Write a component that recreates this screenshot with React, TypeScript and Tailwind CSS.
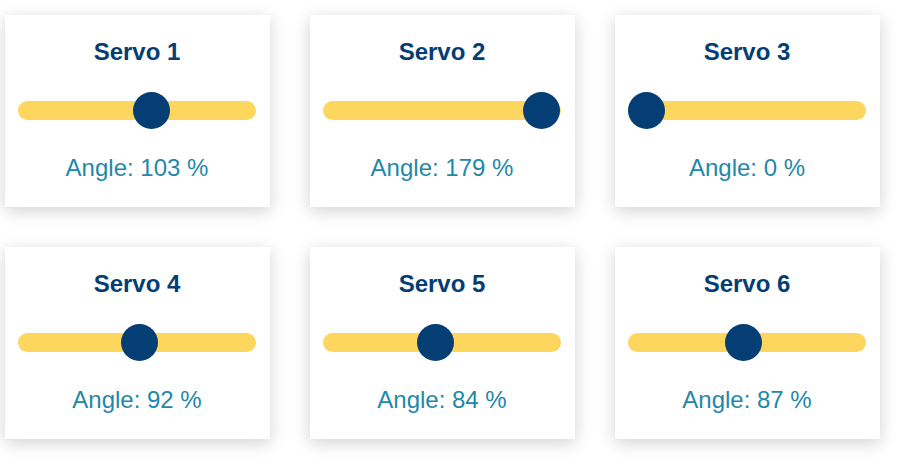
import React from 'react';

type Servo = { id: number; angle: number };

const servos: Servo[] = [
  { id: 1, angle: 103 },
  { id: 2, angle: 179 },
  { id: 3, angle: 0 },
  { id: 4, angle: 92 },
  { id: 5, angle: 84 },
  { id: 6, angle: 87 },
];

const ServoCard: React.FC<{ servo: Servo }> = ({ servo }) => {
  const ratio = servo.angle / 180;

  return (
    <div className="bg-white shadow-[0_4px_16px_0_rgba(0,0,0,0.18)] h-[192px] pt-[25px] pl-[13px] pr-[14px] flex flex-col items-center">
      <h2 className="text-[24px] leading-[24px] font-bold text-[#043e74]">Servo {servo.id}</h2>

      {/* slider */}
      <div className="relative w-full h-[37px] mt-[28px] flex items-center">
        <div className="w-full h-[19px] rounded-full bg-[#fdd65d]" />
        <div
          className="absolute top-0 w-[37px] h-[37px] rounded-full bg-[#043e74]"
          style={{ left: `calc((100% - 37px) * ${ratio})` }}
        />
      </div>

      <p className="mt-[27px] text-[24px] leading-[24px] text-[#1f88aa]">Angle: {servo.angle} %</p>
    </div>
  );
};

const App: React.FC = () => {
  return (
    <div className="w-[900px] h-[468px] bg-white pt-[15px] pl-[5px] font-['Liberation_Sans',Arial,sans-serif]">
      <div className="grid grid-cols-[repeat(3,265px)] gap-[40px]">
        {servos.map((s) => (
          <ServoCard key={s.id} servo={s} />
        ))}
      </div>
    </div>
  );
};

export default App;
